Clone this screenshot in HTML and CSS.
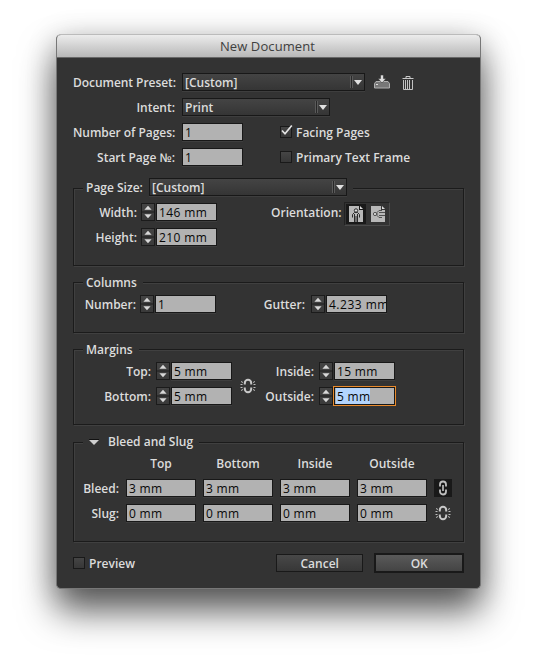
FILE: index.html
```
<!DOCTYPE html>
<html lang="en">
<head>
<meta charset="utf-8">
<title>New Document</title>
<link rel="stylesheet" href="styles.css">
</head>
<body>
<svg class="defs" width="0" height="0">
  <symbol id="spin" viewBox="0 0 12 16"><path d="M0 8h12" stroke="#1c1c1c" stroke-width="1"/><path d="M6 1.800l3.600 3.900H2.400zM6 14.200l3.600-3.900H2.400z" fill="#d8d8d8"/></symbol>
  <symbol id="unlink" viewBox="0 0 16 16"><path d="M4.800 6.500V5a3.200 3.200 0 0 1 6.400 0v1.500M4.800 9.500V11a3.200 3.200 0 0 0 6.400 0V9.500" fill="none" stroke="#c8c8c8" stroke-width="2"/><path d="M1 3.500l2 1M.5 6.500h2M.5 9.500h2M1 12.500l2-1M15 3.500l-2 1M15.500 6.500h-2M15.500 9.500h-2M15 12.500l-2-1" stroke="#bdbdbd" stroke-width="1"/></symbol>
</svg>
<main class="dialog">
  <header class="titlebar">New Document</header>
  <div class="content">
    <div class="row"><label class="w-main t-preset">Document Preset:</label><div class="select preset">[Custom]<i></i></div>
      <svg class="save" width="16" height="14" viewBox="0 0 16 14"><path d="M.5 8.500l1.500-2h12l1.500 2v4.500H.5z" fill="#777" stroke="#b0b0b0"/><path d="M2 9.500h2" stroke="#ddd"/><path d="M6.500 0h3v3.500H12L8 8 4 3.500h2.500z" fill="#dedede" stroke="#333" stroke-width=".6"/></svg>
      <svg class="trash" width="12" height="14" viewBox="0 0 12 14"><path d="M4 2V.5h4V2M.5 2.500h11" fill="none" stroke="#c9c9c9"/><path d="M1.500 4v9.500h9V4M3.500 4v9M5.500 4v9M7.500 4v9" fill="none" stroke="#c2c2c2"/></svg>
    </div>
    <div class="row"><label class="w-main">Intent:</label><div class="select intent">Print<i></i></div></div>
    <div class="row"><label class="w-main t-num">Number of Pages:</label><div class="field">1</div><span class="check first"><svg width="14" height="12" viewBox="0 0 14 12"><path d="M2 5.500l3 3.300L11.800.5" fill="none" stroke="#e2e2e2" stroke-width="1.700"/></svg></span><span class="check-label t-facing">Facing Pages</span></div>
    <div class="row"><label class="w-main t-start">Start Page №:</label><div class="field">1</div><span class="check first"></span><span class="check-label t-primary">Primary Text Frame</span></div>

    <section class="group page">
      <div class="legend"><span class="t-size">Page Size:</span><div class="select size">[Custom]<i></i></div></div>
      <div class="cols">
        <div>
          <div class="row"><label class="w-page">Width:</label><svg class="spin"><use href="#spin"/></svg><div class="field wide">146 mm</div></div>
          <div class="row"><label class="w-page">Height:</label><svg class="spin"><use href="#spin"/></svg><div class="field wide">210 mm</div></div>
        </div>
        <div class="orient"><label class="t-orient">Orientation:</label>
          <div class="toggle">
            <span class="on"><svg width="16" height="18" viewBox="0 0 16 18"><path d="M1 1h10v4h4v12H1z" fill="#b8b8b8"/><path d="M12 1l3 3h-3z" fill="#ddd"/><path d="M4.500 12.500V9.500l2-2h3l2 2v3M6.500 9v8M9.500 9v8M8 11v6" fill="none" stroke="#2b2b2b"/><circle cx="8" cy="5.500" r="1.700" fill="#ddd" stroke="#292929"/></svg></span>
            <span><svg width="16" height="18" viewBox="0 0 16 18"><path d="M1 1h10v4h4v12H1z" fill="#b8b8b8"/><path d="M12 1l3 3h-3z" fill="#ddd"/><path d="M12 5.500H9l-2 2v3l2 2h3M9 7.500h6M9 10.500h6" fill="none" stroke="#505050"/><circle cx="5" cy="9" r="1.600" fill="#ddd" stroke="#505050"/></svg></span>
          </div>
        </div>
      </div>
    </section>

    <section class="group columns">
      <div class="legend"><span>Columns</span></div>
      <div class="row"><label class="w-number">Number:</label><svg class="spin"><use href="#spin"/></svg><div class="field">1</div><label class="w-gutter">Gutter:</label><svg class="spin"><use href="#spin"/></svg><div class="field clip">4.233 mm</div></div>
    </section>

    <section class="group margins">
      <div class="legend"><span>Margins</span></div>
      <div class="cols">
        <div>
          <div class="row"><label class="w-margin">Top:</label><svg class="spin"><use href="#spin"/></svg><div class="field">5 mm</div></div>
          <div class="row"><label class="w-margin">Bottom:</label><svg class="spin"><use href="#spin"/></svg><div class="field">5 mm</div></div>
        </div>
        <svg class="link" width="16" height="16"><use href="#unlink"/></svg>
        <div>
          <div class="row"><label class="w-inside">Inside:</label><svg class="spin"><use href="#spin"/></svg><div class="field">15 mm</div></div>
          <div class="row"><label class="w-inside">Outside:</label><svg class="spin"><use href="#spin"/></svg><div class="field focus"><mark>5 mm</mark></div></div>
        </div>
      </div>
    </section>

    <section class="group bleed">
      <div class="legend"><svg class="disclose" width="10" height="7" viewBox="0 0 10 7"><path d="M0 1h10L5 6z" fill="#cfcfcf"/><path d="M0 .5h10" stroke="#111"/></svg><span class="t-bleed">Bleed and Slug</span></div>
      <div class="table">
        <span></span><b>Top</b><b>Bottom</b><b>Inside</b><b>Outside</b><span></span>
        <label>Bleed:</label><div class="field">3 mm</div><div class="field">3 mm</div><div class="field">3 mm</div><div class="field">3 mm</div>
        <span class="chain"><svg width="10" height="16" viewBox="0 0 10 16"><path d="M2 6.500V4.500a3 3 0 0 1 6 0v2M8 9.500v2a3 3 0 0 1-6 0v-2" fill="none" stroke="#c0c0c0" stroke-width="1.800"/><path d="M5 5v6" stroke="#d0d0d0" stroke-width="1.500"/></svg></span>
        <label>Slug:</label><div class="field">0 mm</div><div class="field">0 mm</div><div class="field">0 mm</div><div class="field">0 mm</div>
        <svg class="slug-link" width="16" height="16"><use href="#unlink"/></svg>
      </div>
    </section>

    <footer class="footer"><span class="check"></span><span class="check-label">Preview</span><div class="button cancel">Cancel</div><div class="button ok">OK</div></footer>
  </div>
</main>
</body>
</html>
```
FILE: styles.css
```
* { box-sizing: border-box; }
body { margin: 0; height: 667px; overflow: hidden; background: #fff; padding: 34px 0 0 56px; font: 600 12px/20px "Open Sans", "Noto Sans", sans-serif; color: #dcdcdc; }
svg { display: block; flex: none; }
.defs { position: absolute; }
.dialog { width: 425px; height: 555px; border: 1px solid #777; border-top-color: #bbb; border-radius: 5px; background: #333; box-shadow: 0 22px 36px rgba(0,0,0,.62), 0 4px 30px rgba(0,0,0,.2); overflow: hidden; }
.titlebar { height: 23px; border-bottom: 1px solid #686868; background: linear-gradient(#ececec, #b8b8b8); color: #404040; text-align: center; font-size: 13px; font-weight: 400; line-height: 23px; letter-spacing: .1px; padding-right: 2px; }
.content { padding: 15px 16px 0; }
.row { display: flex; height: 18px; margin-bottom: 7px; white-space: nowrap; }
label { flex: none; text-align: right; white-space: nowrap; }
.w-main { width: 102px; margin-right: 7px; }
.t-preset, .t-num { letter-spacing: -.05px; }
.select { position: relative; height: 18px; border: 1px solid #181818; background: linear-gradient(#444, #353535); padding-left: 2px; line-height: 18px; box-shadow: 0 1px #3e3e3e; }
.select::after { content: ""; position: absolute; right: 2px; top: 6px; border: 4px solid transparent; border-top: 5px solid #e0e0e0; border-bottom: 0; }
.select i { position: absolute; right: 11px; top: 2px; width: 3px; height: 12px; border: solid #5a5a5a; border-width: 0 1px; background: #282828; }
.preset { width: 183px; }
.intent { width: 148px; }
.size { width: 198px; }
.field { flex: none; width: 61px; height: 18px; border: 1px solid #181818; background: #b2b2b2; color: #080808; font-weight: 400; line-height: 18px; padding-left: 2px; overflow: hidden; white-space: nowrap; letter-spacing: .3px; box-shadow: 0 1px #3e3e3e; }
.wide { letter-spacing: .4px; }
.field.clip { padding-left: 2px; letter-spacing: .5px; }
.focus { box-shadow: 0 0 0 1px #e98a2b; padding-left: 1px; }
mark { display: inline-block; height: 16px; background: #b3d4fd; color: #080808; padding: 0 0 0 1px; }
.save { margin: 2px 0 0 9px; }
.trash { margin: 3px 0 0 12px; }
.check { flex: none; width: 12px; height: 12px; margin-top: 3px; border: 1px solid #191919; background: linear-gradient(#454545, #373737); }
.check svg { margin: -2px 0 0 -1px; }
.first { margin-left: 37px; }
.check-label { margin-left: 4px; }
.group { width: 391px; border: 1px solid #1b1b1b; box-shadow: 1px 1px #404040, inset 1px 1px #404040; }
.page { height: 78px; margin-top: 22px; }
.columns { height: 51px; margin-top: 16px; }
.margins { height: 76px; margin-top: 16px; }
.bleed { height: 100px; margin-top: 17px; }
.legend { display: flex; width: fit-content; height: 18px; margin: -10px 0 0 9px; padding: 0 6px 0 3px; background: #333; position: relative; }
.page .legend { margin-top: -11px; }
.bleed .legend { line-height: 18px; }
.t-size { width: 63px; }
.cols { display: flex; }
.page .cols { margin-top: 7px; }
.spin { width: 14px; height: 18px; border: 1px solid #1b1b1b; background: linear-gradient(#444, #3a3a3a); margin-right: 1px; }
.w-page { width: 63px; margin-right: 4px; }
.orient { display: flex; margin-left: 54px; }
.t-orient { width: 70px; }
.toggle { display: flex; width: 46px; height: 24px; margin: -1px 0 0 3px; border: 1px solid; border-color: #222 #4a4a4a #4a4a4a #222; padding: 1px; }
.toggle span { width: 20px; height: 20px; padding: 1px 2px; margin-right: 2px; }
.toggle .on { background: #191919; }
.columns .row { margin-top: 4px; }
.w-number { width: 62px; margin-right: 4px; }
.w-gutter { width: 89px; margin-right: 6px; }
.margins .cols { margin-top: 4px; }
.w-margin { width: 77px; margin-right: 5px; }
.link { margin: 16px 0 0 8px; }
.w-inside { width: 58px; margin-right: 5px; }
.disclose { margin: 6px 0 0 3px; }
.t-bleed { margin-left: 9px; }
.table { display: grid; grid-template-columns: 45px 70px 70px 70px 70px 18px; grid-template-rows: 18px 18px 18px; gap: 7px; margin-top: 3px; }
.table .field { width: 70px; }
.table b { font-weight: 600; text-align: center; }
.chain { display: flex; width: 18px; height: 18px; background: #191919; justify-content: center; align-items: center; }
.slug-link { margin: 1px; }
.footer { display: flex; height: 20px; margin-top: 11px; }
.footer .check { margin-top: 4px; }
.footer .check-label { width: 187px; margin-top: 1px; }
.button { text-align: center; border: 1px solid #191919; background: linear-gradient(#484848, #373737); }
.cancel { width: 88px; height: 18px; line-height: 18px; margin: 1px 0 0 1px; }
.ok { width: 90px; height: 20px; border-width: 2px; line-height: 18px; margin-left: 11px; background: linear-gradient(#5a5a5a, #444); }
```
